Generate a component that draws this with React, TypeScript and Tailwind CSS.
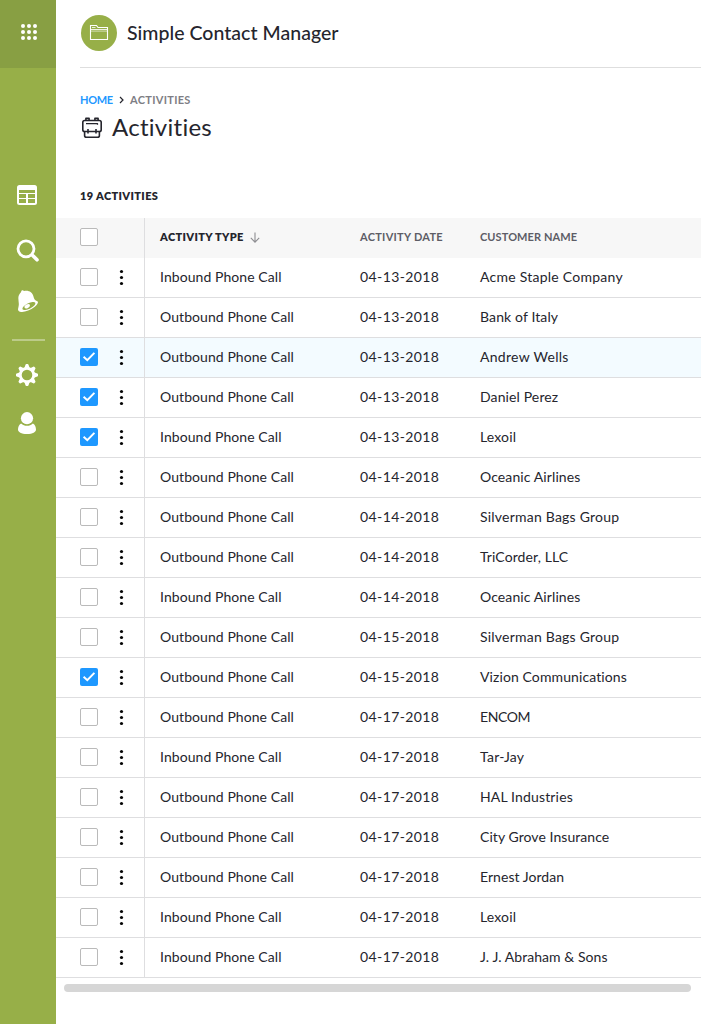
import React from "react";

type Row = { type: "Inbound" | "Outbound"; date: string; name: string; tracking: string; checked?: boolean; active?: boolean };

const rows: Row[] = [
  { type: "Inbound", date: "04-13-2018", name: "Acme Staple Company", tracking: "tracking-[0.25px]" },
  { type: "Outbound", date: "04-13-2018", name: "Bank of Italy", tracking: "tracking-[0.12px]" },
  { type: "Outbound", date: "04-13-2018", name: "Andrew Wells", tracking: "tracking-[0.3px]", checked: true, active: true },
  { type: "Outbound", date: "04-13-2018", name: "Daniel Perez", tracking: "tracking-[0.12px]", checked: true },
  { type: "Inbound", date: "04-13-2018", name: "Lexoil", tracking: "tracking-[0.15px]", checked: true },
  { type: "Outbound", date: "04-14-2018", name: "Oceanic Airlines", tracking: "tracking-[0.1px]" },
  { type: "Outbound", date: "04-14-2018", name: "Silverman Bags Group", tracking: "tracking-[0.22px]" },
  { type: "Outbound", date: "04-14-2018", name: "TriCorder, LLC", tracking: "tracking-[0.1px]" },
  { type: "Inbound", date: "04-14-2018", name: "Oceanic Airlines", tracking: "tracking-[0.1px]" },
  { type: "Outbound", date: "04-15-2018", name: "Silverman Bags Group", tracking: "tracking-[0.22px]" },
  { type: "Outbound", date: "04-15-2018", name: "Vizion Communications", tracking: "tracking-[0.1px]", checked: true },
  { type: "Outbound", date: "04-17-2018", name: "ENCOM", tracking: "tracking-[-0.4px]" },
  { type: "Inbound", date: "04-17-2018", name: "Tar-Jay", tracking: "tracking-[0.25px]" },
  { type: "Outbound", date: "04-17-2018", name: "HAL Industries", tracking: "tracking-[0.15px]" },
  { type: "Outbound", date: "04-17-2018", name: "City Grove Insurance", tracking: "tracking-[0.06px]" },
  { type: "Outbound", date: "04-17-2018", name: "Ernest Jordan", tracking: "tracking-[0.05px]" },
  { type: "Inbound", date: "04-17-2018", name: "Lexoil", tracking: "tracking-[0.15px]" },
  { type: "Inbound", date: "04-17-2018", name: "J. J. Abraham & Sons", tracking: "tracking-[0.05px]" },
];

function Checkbox({ checked }: { checked?: boolean }) {
  return checked ? (
    <span className="flex size-[18px] shrink-0 items-center justify-center rounded-[2px] bg-[#1e98ff]">
      <svg width="18" height="18" viewBox="0 0 18 18" fill="none" stroke="#fff" strokeWidth="2">
        <path d="M3.6 8.8 7.3 12.2 14.4 4.9" />
      </svg>
    </span>
  ) : (
    <span className="size-[18px] shrink-0 rounded-[2px] border border-[#bababa] bg-white" />
  );
}

function Dots() {
  return (
    <svg className="ml-[21px] shrink-0" width="5" height="18" viewBox="0 0 5 18" fill="#050505">
      <circle cx="2.5" cy="3.5" r="1.6" />
      <circle cx="2.5" cy="9.5" r="1.6" />
      <circle cx="2.5" cy="15.5" r="1.6" />
    </svg>
  );
}

function Sidebar() {
  return (
    <aside className="flex w-14 shrink-0 flex-col bg-[#97af48]">
      <div className="flex h-[68px] justify-center bg-[#889f43] pt-6 pl-[2px]">
        <svg width="16" height="16" viewBox="0 0 16 16" fill="#fff">
          {[2, 8, 14].map((y) => [2, 8, 14].map((x) => <circle key={`${x}-${y}`} cx={x} cy={y} r="2" />))}
        </svg>
      </div>
      <svg className="mt-[117px] ml-[17px]" width="20" height="20" viewBox="0 0 20 20">
        <rect width="20" height="20" rx="2.5" fill="#fff" />
        <g fill="#97af48">
          <rect x="2" y="5" width="16" height="3" />
          <rect x="2" y="9" width="7" height="4" />
          <rect x="11" y="9" width="7" height="4" />
          <rect x="2" y="14" width="7" height="4" />
          <rect x="11" y="14" width="7" height="4" />
        </g>
      </svg>
      <svg className="mt-[34px] ml-4" width="24" height="24" viewBox="0 0 24 24" fill="none" stroke="#fff">
        <circle cx="10" cy="9.8" r="8" strokeWidth="2.8" />
        <path d="m15.5 15.5 1.5 1.5" strokeWidth="2.5" />
        <path d="m17.2 17 3.8 3.8" strokeWidth="3.6" strokeLinecap="round" />
      </svg>
      <svg className="mt-[26px] ml-4" width="24" height="24" viewBox="0 0 24 24">
        <path d="M5.1 3C5.1 1.1 7 .7 8 2c4.7-1.1 8.4 1.2 9.4 5.3.7 2.6 1.1 4.1 3.4 4.6 2.4.7.8 3.9-2.3 6.2-5.3 4.3-13.4 6.2-15.8 3.9-1.7-1.6.4-3.7.1-7.5C2.5 10 1.2 7.1 5.1 3Z" fill="#fff" />
        <ellipse cx="12.9" cy="17" rx="7.2" ry="2.7" transform="rotate(-27 12.9 17)" fill="#97af48" />
        <ellipse cx="11.2" cy="17.2" rx="3" ry="1.9" transform="rotate(-27 11.2 17.2)" fill="#fff" />
      </svg>
      <div className="mt-[26px] ml-[11.5px] h-0.5 w-[33px] bg-[#bccb89]" />
      <svg className="mt-[22px] ml-4" width="22" height="24" viewBox="0 0 22 24">
        <g fill="#fff">
          {[0, 45, 90, 135, 180, 225, 270, 315].map((a) => (
            <path key={a} transform={`rotate(${a} 11 12)`} d="M8.3 5 9.5 1.7q.2-.7.8-.7h1.4q.6 0 .8.7L13.7 5Z" />
          ))}
        </g>
        <circle cx="11" cy="12" r="6.7" fill="none" stroke="#fff" strokeWidth="2.8" />
      </svg>
      <svg className="mt-[24px] ml-[17px]" width="20" height="24" viewBox="0 0 20 24" fill="#fff">
        <circle cx="10" cy="7.2" r="6.1" />
        <path d="M4.1 12.4c3.3 3.1 8.5 3.1 11.8 0C18 13.6 19 15.9 19 18.5c0 2.7-3.2 4.5-9 4.5s-9-1.8-9-4.5c0-2.6 1-4.9 3.1-6.1Z" />
      </svg>
    </aside>
  );
}

export default function App() {
  return (
    <div className="flex h-[1024px] w-[701px] overflow-hidden bg-white font-['Lato','Noto_Sans',sans-serif] text-[#25252d] [font-variant-ligatures:none]">
      <Sidebar />
      <main className="flex min-w-0 flex-1 flex-col">
        <header className="ml-6 flex h-[68px] items-center border-b border-[#dedede] pb-px">
          <div className="ml-px flex size-9 items-center justify-center rounded-full bg-[#97af48]">
            <svg width="20" height="18" viewBox="0 0 20 18" fill="none" stroke="#fff">
              <path d="M1.5 15.5v-14h6l1.5 2h9.5v12Z" strokeWidth="1.1" />
              <path d="M2 5.5h16" strokeWidth="1" opacity=".85" />
              <path d="M2 7.1h16" strokeWidth="1" opacity=".6" />
              <path d="M3 3.5h3.5" strokeWidth=".8" />
            </svg>
          </div>
          <h1 className="ml-[10px] whitespace-nowrap text-[19.5px] leading-6 font-medium tracking-[0.03px]">Simple Contact Manager</h1>
        </header>
        <nav className="mt-6 ml-6 flex h-4 items-center text-[11px] leading-4 font-bold">
          <span className="w-[33px] whitespace-nowrap tracking-[-0.3px] text-[#1e98ff]">HOME</span>
          <svg className="ml-[5px]" width="7" height="8" viewBox="0 0 7 8" fill="none" stroke="#25252d" strokeWidth="1.2">
            <path d="m2 1 3 3-3 3" />
          </svg>
          <span className="ml-[5px] whitespace-nowrap tracking-[0.3px] text-[#7e7e84]">ACTIVITIES</span>
        </nav>
        <div className="mt-1 ml-6 flex h-8 items-center">
          <svg className="ml-[2px]" width="20" height="22" viewBox="0 0 20 22" fill="none" stroke="#25252d" strokeWidth="1.6" strokeLinejoin="round">
            <path d="M2.6 14.5Q.8 14.5.8 12.7V5.3q0-1.8 1.8-1.8h14.8q1.8 0 1.8 1.8v7.4q0 1.8-1.8 1.8Z" />
            <path d="M3.9 3.3V1.4h3.2v1.9M12.9 3.3V1.4h3.2v1.9" />
            <path d="M4 6.6h11.5v1.2" strokeWidth="1.3" />
            <path d="M2.6 14.5v3.9q0 1.9 1.9 1.9h11q1.9 0 1.9-1.9v-3.9M6 12v4.6M14 12v4.6" />
          </svg>
          <h2 className="ml-[10px] whitespace-nowrap pb-0.5 text-[24px] leading-8 tracking-[0.27px]">Activities</h2>
        </div>
        <p className="mt-[44px] ml-6 h-4 text-[11px] leading-4 font-extrabold tracking-[0.36px]">19 ACTIVITIES</p>
        <div className="mt-[14px] flex h-10 items-stretch bg-[#f7f7f7] text-[11px] leading-4 font-bold text-[#5d5d66]">
          <div className="flex w-[89px] items-center border-r border-[#dedee0] pb-0.5 pl-6">
            <Checkbox />
          </div>
          <div className="flex w-[215px] items-center pb-0.5 pl-[15px] font-extrabold text-[#25252d]">
            <span className="w-[84px] whitespace-nowrap tracking-[0.34px]">ACTIVITY TYPE</span>
            <svg className="ml-[6px]" width="10" height="11" viewBox="0 0 10 11" fill="none" stroke="#8e8e92" strokeWidth="1.1">
              <path d="M5 .5v9.6M.8 5.9 5 10.1l4.2-4.2" />
            </svg>
          </div>
          <div className="flex w-[120px] items-center pb-0.5 tracking-[0.28px]">ACTIVITY DATE</div>
          <div className="flex flex-1 items-center pb-0.5 tracking-[0.08px]">CUSTOMER NAME</div>
        </div>
        <div className="flex flex-col text-[14px] leading-5">
          {rows.map((row, i) => (
            <div key={i} className={`flex h-10 items-stretch border-b border-[#dedee0] ${row.active ? "bg-[#f3fbff]" : "bg-white"}`}>
              <div className="flex w-[89px] items-center border-r border-[#dedee0] pb-px pl-6">
                <Checkbox checked={row.checked} />
                <Dots />
              </div>
              <div className="flex w-[215px] items-center pb-px pl-[15px] tracking-[0.07px]">{row.type} Phone Call</div>
              <div className="flex w-[120px] items-center pb-px tracking-[0.4px]">{row.date}</div>
              <div className={`flex flex-1 items-center pb-px ${row.tracking}`}>{row.name}</div>
            </div>
          ))}
        </div>
        <div className="mt-[6px] mr-[10px] ml-2 h-2 rounded-full bg-[#d6d6d6]" />
      </main>
    </div>
  );
}
